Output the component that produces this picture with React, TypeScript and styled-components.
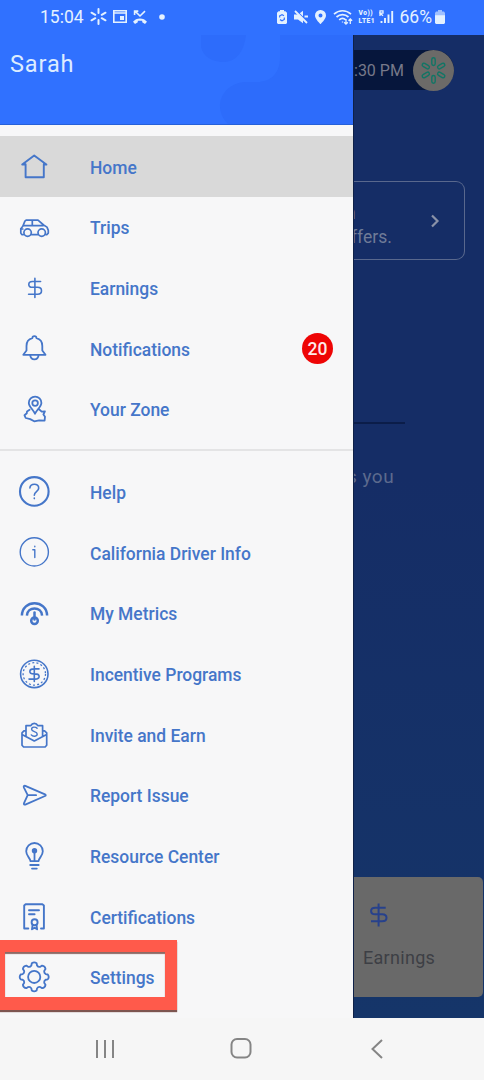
import React from "react";
import styled, { createGlobalStyle } from "styled-components";

const GlobalStyle = createGlobalStyle`
  * { box-sizing: border-box; }
  body { margin: 0; background: #f6f6f6; font-family: Roboto, "Liberation Sans", sans-serif; }
  svg { display: block; flex: none; }
`;

const Screen = styled.div`
  width: 484px;
  height: 1080px;
  display: flex;
  flex-direction: column;
  overflow: hidden;
`;

const StatusBar = styled.header`
  height: 35px;
  flex: none;
  display: flex;
  align-items: center;
  justify-content: space-between;
  padding: 0 39px 2px 40px;
  background: #3071ff;
  color: #e4f1ff;
`;

const StatusGroup = styled.div<{ $gap: number }>`
  display: flex;
  align-items: center;
  gap: ${(p) => p.$gap}px;
`;

const StatusText = styled.span`
  font-size: 17.5px;
  line-height: 20px;
`;

const Main = styled.div`
  height: 983px;
  flex: none;
  display: flex;
`;

const Drawer = styled.aside`
  width: 353px;
  flex: none;
  background: #f7f7f8;
  display: flex;
  flex-direction: column;
`;

const Profile = styled.div`
  position: relative;
  height: 90px;
  flex: none;
  padding: 15px 10px;
  background: #3071ff;
  border-bottom: 1px solid #2660d8;
  color: #dcecff;
  font-size: 23.5px;
  line-height: 28px;
  letter-spacing: 0.9px;
`;

const ProfileArt = styled.svg`
  position: absolute;
  right: 0;
  top: 0;
`;

const ProfileName = styled.span`
  position: relative;
`;

const Menu = styled.nav`
  display: flex;
  flex-direction: column;
  padding-top: 11px;
`;

const Divider = styled.hr`
  width: 100%;
  height: 2px;
  margin: 10px 0;
  border: 0;
  background: #e4e4e5;
`;

const MenuRow = styled.a<{ $active?: boolean }>`
  position: relative;
  height: 60.7px;
  flex: none;
  display: flex;
  align-items: center;
  padding: 0 20px 0 18px;
  background: ${(p) => (p.$active ? "#d9d9d9" : "transparent")};
  color: #4576c9;
`;

const MenuLabel = styled.span`
  flex: 1;
  margin-left: 40px;
  padding-top: 2.4px;
  font-size: 17.45px;
  font-weight: 500;
  line-height: 24px;
`;

const Badge = styled.span`
  width: 31px;
  height: 31px;
  border-radius: 50%;
  display: flex;
  align-items: center;
  justify-content: center;
  padding-top: 1px;
  background: #ee0505;
  color: #ffe9e9;
  font-size: 17.5px;
  font-weight: 500;
`;

const Callout = styled.span`
  position: absolute;
  left: 0;
  top: -7px;
  width: 177px;
  height: 70px;
  border: solid #ff5a4b;
  border-width: 12px 12px 13px 5px;
  box-shadow: 0 2px 1px #7d5550, inset 0 2px 1px #8d6964;
`;

const Backdrop = styled.main`
  flex: 1;
  min-width: 0;
  display: flex;
  flex-direction: column;
  overflow: hidden;
  background: linear-gradient(#152d66 0%, #152d66 45%, #153569 100%);
  border-left: 1px solid #0f2148;
  color: #6f7b97;
`;

const TimePill = styled.div`
  display: flex;
  align-items: center;
  justify-content: space-between;
  width: 100px;
  height: 40px;
  margin-top: 15px;
  border-radius: 0 20px 20px 0;
  background: #06163c;
  font-size: 16px;
  color: #77798a;
`;

const Avatar = styled.div`
  width: 41px;
  height: 41px;
  border-radius: 50%;
  display: grid;
  place-items: center;
  background: #6c6a68;
`;

const OfferCard = styled.section`
  width: 111px;
  height: 79px;
  flex: none;
  display: flex;
  align-items: center;
  justify-content: space-between;
  margin-top: 91px;
  padding-right: 24px;
  border: solid #59688d;
  border-width: 1.5px 1.5px 1.5px 0;
  border-radius: 0 9px 9px 0;
`;

const OfferText = styled.div`
  font-size: 17.5px;
  line-height: 24px;
  padding-top: 8px;
  white-space: pre;
`;

const OfferLine = styled.div<{ $shift: number }>`
  margin-left: ${(p) => p.$shift}px;
`;

const Rule = styled.div`
  width: 51px;
  height: 2px;
  flex: none;
  margin-top: 162px;
  background: #0b1d49;
`;

const Prompt = styled.p`
  margin: 40px 0 0 -7px;
  font-size: 19px;
  line-height: 26px;
  letter-spacing: 0.5px;
  color: #5c6a8d;
`;

const EarningsTile = styled.section`
  height: 120px;
  width: 129px;
  flex: none;
  display: flex;
  flex-direction: column;
  align-items: flex-start;
  margin: auto 0 21px;
  padding: 21px 0 0 9px;
  gap: 17px;
  border-radius: 0 5px 5px 0;
  background: #696969;
  color: #3d3f45;
  font-size: 18px;
  letter-spacing: 0.3px;
`;

const NavBar = styled.footer`
  height: 62px;
  flex: none;
  display: flex;
  align-items: center;
  background: #f6f6f6;
  padding: 0 0 1px 94px;
`;

const NavSlot = styled.div<{ $left: number }>`
  margin-left: ${(p) => p.$left}px;
`;

const Icon = ({ children, w = 1.6 }: { children: React.ReactNode; w?: number }) => (
  <svg width="32" height="32" viewBox="0 0 32 32" fill="none" stroke="currentColor" strokeWidth={w} strokeLinecap="round" strokeLinejoin="round">
    {children}
  </svg>
);

const HomeIcon = () => (
  <Icon w={1.9}>
    <path d="M7.6 14.2v13.1h18.2V14.2M7.6 14.6H4.2L16.2 5.5l12.2 9.1h-2.6" />
  </Icon>
);
const CarIcon = () => (
  <Icon w={1.7}>
    <path d="M5.3 23.6H3.8l-1-1.5v-4.4l2-2.4 2.1-5.2 1.2-1H20l5.6 4.9 3.4 2.1 1.3 3.3v2.7l-1.5 1.5h-1M13.6 23.6h6.2M5 14.6h20.2M14.3 9.2v5.2" />
    <circle cx="9.6" cy="21.6" r="3.7" />
    <circle cx="23.7" cy="21.6" r="3.7" />
    <path d="M2.8 18h2" />
  </Icon>
);
const EarningsIcon = () => (
  <Icon w={1.6}>
    <path d="M22.6 9.5h-8.2c-2.4 0-3.6 1.3-3.6 2.9 0 1.8 1.6 2.9 3.6 2.9h5.2c2.3 0 3.9 1.3 3.9 3.4s-1.6 3.5-3.9 3.5h-9M16.9 6.4v19.1" />
  </Icon>
);
const BellIcon = () => (
  <Icon w={1.8}>
    <path d="M14.3 6.2a2.1 2.1 0 0 1 4.2 0c3.7.9 5.8 4.2 5.8 7.8v4.5l3.2 4.3H5.3l3.2-4.3V14c0-3.6 2.1-6.9 5.8-7.8zM12.2 23.2c.6 5.6 7.8 5.6 8.4 0" />
  </Icon>
);
const ZoneIcon = () => (
  <Icon w={1.8}>
    <path d="M17 20.8c-1.3-3.5-6.2-7.4-6.2-10.9a6.3 6.3 0 0 1 12.6 0c0 3.5-5.1 7.4-6.4 10.9zM11.6 16.7 9 18.4l-.2 1.9-2.3 2 1.2 2.7 4.5 1.1 4 2.2 5-1 5.4.4.4-4-1.6-2.2 1.5-3.2-3.2.3-2.4-2.1" />
    <circle cx="17.1" cy="10.1" r="2.8" />
  </Icon>
);
const HelpIcon = () => (
  <Icon w={1.6}>
    <circle cx="16.3" cy="15.4" r="14.3" strokeWidth="2.1" />
    <path d="M11.9 12c.3-5.1 9-5.1 8.8.1-.1 3.6-4.4 3.5-4.4 7.1M16.3 22.1v.5" />
  </Icon>
);
const InfoIcon = () => (
  <Icon w={1.4}>
    <circle cx="16.3" cy="15.9" r="14.1" />
    <path d="M14.8 13.7h2v7.9M16.8 10.3v.4" />
  </Icon>
);
const MetricsIcon = () => (
  <Icon w={2.5}>
    <path strokeLinecap="butt" d="M3.9 18.6c.3-16.4 24.9-16.4 25.2 0M8.9 18.6c.4-9.6 14.8-9.6 15.2 0" />
    <circle cx="16.5" cy="23.7" r="3.3" />
    <path d="M16.5 15.6v7" />
  </Icon>
);
const CoinIcon = () => (
  <Icon w={1.6}>
    <circle cx="16.3" cy="15.9" r="13.7" />
    <circle cx="16.3" cy="15.9" r="11.2" strokeWidth="1.3" strokeLinecap="butt" strokeDasharray="2 2.2" />
    <path d="M21 10.9h-5c-5.5 0-5.5 5 0 5h1c5.5 0 5.5 5.2 0 5.2h-6M16.3 8.3v15.2" />
  </Icon>
);
const InviteIcon = () => (
  <Icon w={1.7}>
    <path d="M8 11.9H5.9L4 13.8v12.4L5.6 28h21.5l1.6-1.8V13.8l-2.1-1.9h-2M4.5 15.7l11.8 6.2 11.9-6.2M8 17.3V6.7h4.8c1.5-3.2 5.5-3.2 7 0h4.8v10.6" />
    <path strokeWidth="1.4" d="M19.1 9.3c-1.6-1.8-5.5-1.5-5.5.9 0 2.8 5.6 1.9 5.6 4.8 0 2.7-4.3 2.9-5.9.9" />
  </Icon>
);
const SendIcon = () => (
  <Icon w={1.8}>
    <path d="M9.7 16.2 5.8 8.3c-.4-1.2.4-1.8 1.5-1.4L27 15.3c1 .5 1 1.2 0 1.7L7.3 25.6c-1.1.3-1.8-.3-1.3-1.4zh8.4" />
  </Icon>
);
const BulbIcon = () => (
  <Icon w={1.8}>
    <path d="M12.5 21.2c-.2-3.3-4.3-5-4.3-9.9a8.3 8.3 0 0 1 16.6 0c0 4.9-4.1 6.6-4.3 9.9zM12.2 25h8.5M14 28.6h4.8M16.5 11.8v8.8" />
    <circle cx="16.5" cy="10.8" r="1.8" fill="currentColor" />
  </Icon>
);
const CertificateIcon = () => (
  <Icon w={1.9}>
    <path d="M10.3 27.5H6.2v-23l1.4-1.2h16.8l1.5 1.2v23H23M11 9.3h10M11 13.3h5.6" />
    <circle cx="16.6" cy="21.3" r="3" />
    <path d="m14.6 23.9-.6 4.4 2.6-1.5 2.5 1.5-.6-4.4" />
  </Icon>
);

const GEAR_TEETH = Array.from({ length: 8 }, (_, i) => {
  const p = (deg: number, r: number) => {
    const a = ((i * 45 + deg - 90) * Math.PI) / 180;
    return `${(16.2 + r * Math.cos(a)).toFixed(2)} ${(15.9 + r * Math.sin(a)).toFixed(2)}`;
  };
  return `${i ? "L" : "M"}${p(-10, 13.8)}Q${p(0, 15.4)} ${p(10, 13.8)}L${p(14, 11.8)}Q${p(22.5, 10.4)} ${p(31, 11.8)}`;
}).join("");

const GearIcon = () => (
  <Icon w={1.8}>
    <path d={`${GEAR_TEETH}Z`} />
    <circle cx="16.2" cy="15.9" r="6.1" />
  </Icon>
);

const primary = [
  { label: "Home", icon: <HomeIcon />, active: true },
  { label: "Trips", icon: <CarIcon /> },
  { label: "Earnings", icon: <EarningsIcon /> },
  { label: "Notifications", icon: <BellIcon />, badge: 20 },
  { label: "Your Zone", icon: <ZoneIcon /> },
];

const secondary = [
  { label: "Help", icon: <HelpIcon /> },
  { label: "California Driver Info", icon: <InfoIcon /> },
  { label: "My Metrics", icon: <MetricsIcon /> },
  { label: "Incentive Programs", icon: <CoinIcon /> },
  { label: "Invite and Earn", icon: <InviteIcon /> },
  { label: "Report Issue", icon: <SendIcon /> },
  { label: "Resource Center", icon: <BulbIcon /> },
  { label: "Certifications", icon: <CertificateIcon /> },
  { label: "Settings", icon: <GearIcon />, highlighted: true },
];

const SparkIcon = () => (
  <svg width="17" height="17" viewBox="0 0 17 17" stroke="currentColor" strokeWidth="2" strokeLinecap="round">
    <path d="M8.5 1v4M8.5 12v4M1.5 4.7 5.3 6.8M11.7 10.2l3.8 2.1M1.5 12.3l3.8-2.1M11.7 6.8l3.8-2.1" />
  </svg>
);
const CalendarIcon = () => (
  <svg width="14" height="13" viewBox="0 0 14 13" fill="none" stroke="currentColor" strokeWidth="1.6">
    <path d="M.8.8h12.4v11.4H.8zM.8 3h12.4" />
    <path fill="currentColor" stroke="none" d="M7 6h4v4H7z" />
  </svg>
);
const MissedCallIcon = () => (
  <svg width="14" height="14" viewBox="0 0 14 14" fill="none" stroke="currentColor" strokeWidth="1.6">
    <path d="M2 1.2 7 6l5-4.8M1.6 5V1.1h3.7" />
    <path fill="currentColor" stroke="none" d="M0 11.8C3 7.3 11 7.3 14 11.8l-2 2.1-2.8-1.7V10.7H4.8v1.5L2 13.9z" />
  </svg>
);
const RecycleBatteryIcon = () => (
  <svg width="10" height="14" viewBox="0 0 10 14">
    <path fill="currentColor" d="M3 0h4v1.3h1.5L10 2.7V13l-1 1H1l-1-1V2.7l1.5-1.4H3z" />
    <path fill="none" stroke="#3071ff" strokeWidth="1.2" d="M2.7 7.5V5.8l2.3-1.2 2 1.2M7.3 7.6v1.8L5 10.7 3 9.6" />
  </svg>
);
const MuteIcon = () => (
  <svg width="14" height="14" viewBox="0 0 14 14">
    <path fill="currentColor" d="M0 4.5h4L9 .8v12.4L4 9.5H0z" />
    <path stroke="#3071ff" strokeWidth="1.2" d="m2.2 .5 12 12" />
    <path stroke="currentColor" strokeWidth="1.8" d="m1 1 12 12M10.5 6.5H14" />
  </svg>
);
const PinIcon = () => (
  <svg width="11" height="14" viewBox="0 0 11 14">
    <path fill="currentColor" fillRule="evenodd" d="M5.5 0A5.4 5.4 0 0 0 0 5.4C0 9 5.5 14 5.5 14S11 9 11 5.4A5.4 5.4 0 0 0 5.5 0m0 3.4a2 2 0 1 1 0 4 2 2 0 0 1 0-4" />
  </svg>
);
const WifiIcon = () => (
  <svg width="20" height="16" viewBox="0 0 20 16" fill="none" stroke="currentColor" strokeWidth="1.7">
    <path d="M1 5.2c5-4.6 12-4.6 17 0M3.5 8c3.6-3.2 8.5-3.2 12 0M6.2 10.8c2-1.8 4.6-1.8 6.5 0" />
    <path strokeWidth="1.3" d="M9.5 12.5v1M13 10v5m-1.8-1.8L13 15l1.8-1.8M17.3 15v-5m-1.8 1.8 1.8-1.8 1.8 1.8" />
  </svg>
);

const VolteBox = styled.span`
  width: 18px;
  display: flex;
  flex-direction: column;
  font-size: 6.6px;
  line-height: 8px;
  font-weight: 900;
  letter-spacing: 0.5px;
  white-space: nowrap;
`;

const SignalIcon = () => (
  <svg width="15" height="13" viewBox="0 0 15 13" stroke="currentColor" strokeWidth="1.9">
    <path fill="none" strokeWidth="1.3" d="M1 6V.8h3v2.4H1l3 2.6" />
    <path d="M2.5 13v-2M6 13V8M9.5 13V4.5M13.2 13V1" />
  </svg>
);
const BatteryIcon = () => (
  <svg width="10" height="14" viewBox="0 0 10 14">
    <path fill="#9fc0ff" d="M3 0h4v1.5h2L10 3v3H0V3l1-1.5h2z" />
    <path fill="currentColor" d="M0 5.3h10V13l-1 1H1l-1-1z" />
  </svg>
);

const Row = ({ item }: { item: { label: string; icon: React.ReactNode; active?: boolean; badge?: number; highlighted?: boolean } }) => (
  <MenuRow $active={item.active}>
    {item.icon}
    <MenuLabel>{item.label}</MenuLabel>
    {item.badge && <Badge>{item.badge}</Badge>}
    {item.highlighted && <Callout />}
  </MenuRow>
);

export default function App() {
  return (
    <Screen>
      <GlobalStyle />
      <StatusBar>
        <StatusGroup $gap={6}>
          <StatusText>15:04</StatusText>
          <SparkIcon />
          <CalendarIcon />
          <MissedCallIcon />
          <svg width="18" height="6" viewBox="0 0 18 6"><circle cx="9" cy="3" r="2.8" fill="currentColor" /></svg>
        </StatusGroup>
        <StatusGroup $gap={6}>
          <StatusGroup $gap={7}>
            <RecycleBatteryIcon />
            <MuteIcon />
            <PinIcon />
            <WifiIcon />
          </StatusGroup>
          <StatusGroup $gap={2}>
            <VolteBox><span>Vo))</span><span>LTE1</span></VolteBox>
            <SignalIcon />
          </StatusGroup>
          <StatusGroup $gap={3}>
            <StatusText>66%</StatusText>
            <BatteryIcon />
          </StatusGroup>
        </StatusGroup>
      </StatusBar>
      <Main>
        <Drawer>
          <Profile>
            <ProfileArt width="260" height="89" viewBox="0 0 260 89" fill="#2d6cfb">
              <path d="M108 0v12c2 10 12 15 22 15 13 0 21-10 23-27z" />
              <path d="M187 0v22c0 16-9 25-23 25h-12c-22 1-34 25-17 42h125V0z" />
            </ProfileArt>
            <ProfileName>Sarah</ProfileName>
          </Profile>
          <Menu>
            {primary.map((item) => <Row key={item.label} item={item} />)}
            <Divider />
            {secondary.map((item) => <Row key={item.label} item={item} />)}
          </Menu>
        </Drawer>
        <Backdrop>
          <TimePill>
            <span>:30 PM</span>
            <Avatar>
              <svg width="27" height="27" viewBox="-13.5 -13.5 27 27" fill="none" stroke="#127565" strokeWidth="1.4">
                {[0, 60, 120, 180, 240, 300].map((angle) => (
                  <rect key={angle} x="-1.7" y="-12.8" width="3.4" height="7.8" rx="1.7" transform={`rotate(${angle})`} />
                ))}
              </svg>
            </Avatar>
          </TimePill>
          <OfferCard>
            <OfferText>
              <OfferLine $shift={-8}>n</OfferLine>
              <OfferLine $shift={-3}>ffers.</OfferLine>
            </OfferText>
            <svg width="10" height="14" viewBox="0 0 10 14" fill="none" stroke="#8a92a8" strokeWidth="2.2"><path d="m2 1.5 5.5 5.5L2 12.5" /></svg>
          </OfferCard>
          <Rule />
          <Prompt>s you</Prompt>
          <EarningsTile>
            <svg width="32" height="32" viewBox="0 0 32 32" fill="none" stroke="#27418c" strokeWidth="2">
              <path d="M22.7 9.7H12.2c-2.5 0-4.1 1.3-4.1 3.3s1.6 3.3 4.1 3.3h7c2.6 0 4.3 1.4 4.3 3.5s-1.7 3.5-4.3 3.5H8M15.6 5.5v23" />
            </svg>
            <span>Earnings</span>
          </EarningsTile>
        </Backdrop>
      </Main>
      <NavBar>
        <NavSlot $left={0}>
          <svg width="22" height="20" viewBox="0 0 22 20" stroke="#858585" strokeWidth="2"><path d="M3 1v18M11 1v18M19 1v18" /></svg>
        </NavSlot>
        <NavSlot $left={114}>
          <svg width="22" height="21" viewBox="0 0 22 21" fill="none" stroke="#858585" strokeWidth="2"><rect x="1.5" y="1" width="19" height="18.5" rx="5.5" /></svg>
        </NavSlot>
        <NavSlot $left={118}>
          <svg width="14" height="20" viewBox="0 0 14 20" fill="none" stroke="#858585" strokeWidth="2"><path d="m12 1-9.5 9L12 19" /></svg>
        </NavSlot>
      </NavBar>
    </Screen>
  );
}
